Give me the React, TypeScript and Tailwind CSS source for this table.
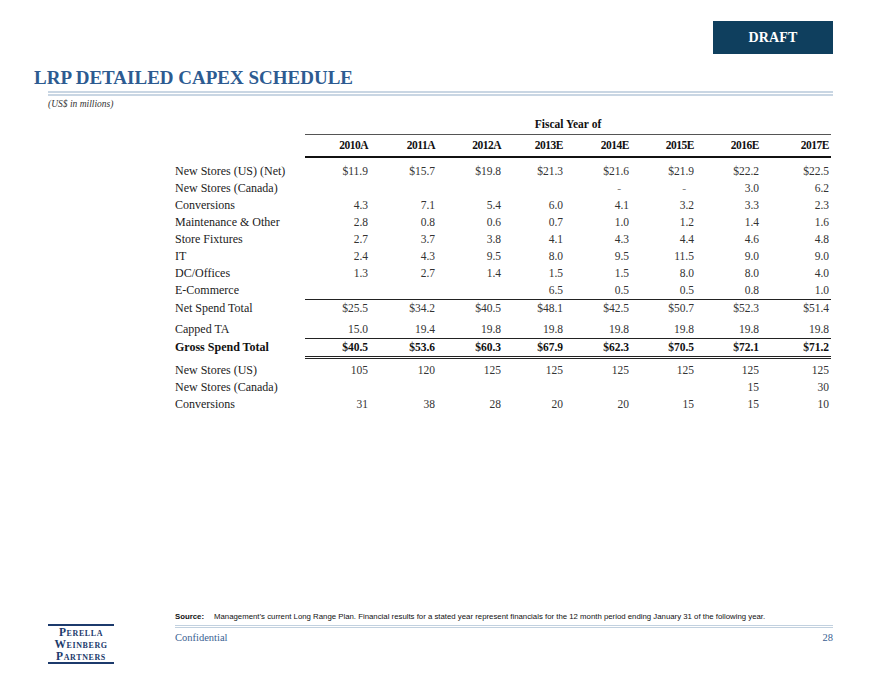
import React from "react";

const cols = ["2010A", "2011A", "2012A", "2013E", "2014E", "2015E", "2016E", "2017E"];
const colW = ["w-[65px]", "w-[67px]", "w-[66px]", "w-[62px]", "w-[66px]", "w-[65px]", "w-[65px]", "w-[70px]"];

type Row = { label: string; vals: string[] };

const rows: Row[] = [
  { label: "New Stores (US) (Net)", vals: ["$11.9", "$15.7", "$19.8", "$21.3", "$21.6", "$21.9", "$22.2", "$22.5"] },
  { label: "New Stores (Canada)", vals: ["", "", "", "", "-", "-", "3.0", "6.2"] },
  { label: "Conversions", vals: ["4.3", "7.1", "5.4", "6.0", "4.1", "3.2", "3.3", "2.3"] },
  { label: "Maintenance & Other", vals: ["2.8", "0.8", "0.6", "0.7", "1.0", "1.2", "1.4", "1.6"] },
  { label: "Store Fixtures", vals: ["2.7", "3.7", "3.8", "4.1", "4.3", "4.4", "4.6", "4.8"] },
  { label: "IT", vals: ["2.4", "4.3", "9.5", "8.0", "9.5", "11.5", "9.0", "9.0"] },
  { label: "DC/Offices", vals: ["1.3", "2.7", "1.4", "1.5", "1.5", "8.0", "8.0", "4.0"] },
  { label: "E-Commerce", vals: ["", "", "", "6.5", "0.5", "0.5", "0.8", "1.0"] },
];

function Vals({ vals, bold }: { vals: string[]; bold?: boolean }) {
  return (
    <>
      {vals.map((v, i) => (
        <div
          key={i}
          className={`${colW[i]} shrink-0 text-right ${bold ? "font-bold text-[#111]" : "text-[#333]"} ${
            v === "-" ? "pr-[10px] text-[#888]" : "pr-[2px]"
          }`}
        >
          {v}
        </div>
      ))}
    </>
  );
}

export default function App() {
  return (
    <div
      className="w-[880px] h-[680px] bg-white flex flex-col overflow-hidden"
      style={{ fontFamily: '"Liberation Serif", "Times New Roman", serif' }}
    >
      {/* Draft badge */}
      <div className="flex justify-end pr-[47px] pt-[21px]">
        <div className="w-[120px] h-[33px] bg-[#0f3f5e] flex items-center justify-center text-white font-bold text-[14px] tracking-[0.2px]">
          DRAFT
        </div>
      </div>

      {/* Title */}
      <div className="pl-[34px] mt-[13px] text-[19px] leading-[22px] font-bold text-[#2d5b91]">
        LRP DETAILED CAPEX SCHEDULE
      </div>
      <div className="ml-[48px] mr-[47px] mt-[2px] h-[5px] border-t-[2px] border-b-[2px] border-[#c9d6e3]" />
      <div className="pl-[48px] mt-[2px] text-[9.5px] leading-[12px] italic text-[#333]">(US$ in millions)</div>

      {/* Table */}
      <div className="pl-[175px] mt-[7px] text-[11.5px]">
        {/* Fiscal Year of */}
        <div className="flex">
          <div className="w-[130px] shrink-0" />
          <div className="w-[526px] border-b border-[#555] text-center font-bold text-[#111] leading-[14px] pb-[3px]">
            Fiscal Year of
          </div>
        </div>
        {/* Column headers */}
        <div className="flex">
          <div className="w-[130px] shrink-0" />
          <div className="flex w-[526px] border-b-2 border-[#111] h-[23px] items-center text-[11.5px] font-bold text-[#111]">
            {cols.map((c, i) => (
              <div key={c} className={`${colW[i]} shrink-0 text-right pr-[2px] tracking-[-0.5px]`}>
                {c}
              </div>
            ))}
          </div>
        </div>

        <div className="pt-[5px]">
          {rows.map((r) => (
            <div key={r.label} className="flex h-[17px] leading-[17px]">
              <div className="w-[130px] shrink-0 text-[#222] text-[12px]">{r.label}</div>
              <div className="flex w-[526px]">
                <Vals vals={r.vals} />
              </div>
            </div>
          ))}
          {/* Net Spend Total */}
          <div className="flex leading-[17px]">
            <div className="w-[130px] shrink-0 text-[#222] text-[12px] pt-px">Net Spend Total</div>
            <div className="flex w-[526px] border-t border-[#222] h-[18px]">
              <Vals vals={["$25.5", "$34.2", "$40.5", "$48.1", "$42.5", "$50.7", "$52.3", "$51.4"]} />
            </div>
          </div>
          {/* Capped TA */}
          <div className="flex h-[17px] leading-[17px] mt-[4px]">
            <div className="w-[130px] shrink-0 text-[#222] text-[12px]">Capped TA</div>
            <div className="flex w-[526px]">
              <Vals vals={["15.0", "19.4", "19.8", "19.8", "19.8", "19.8", "19.8", "19.8"]} />
            </div>
          </div>
          {/* Gross Spend Total */}
          <div className="flex leading-[17px]">
            <div className="w-[130px] shrink-0 text-[#111] text-[12px] font-bold pt-px">Gross Spend Total</div>
            <div className="flex w-[526px] border-t border-b-[3px] border-double border-t-solid border-[#222] h-[21px]">
              <Vals bold vals={["$40.5", "$53.6", "$60.3", "$67.9", "$62.3", "$70.5", "$72.1", "$71.2"]} />
            </div>
          </div>
          <div className="pt-[3px]">
            {[
              { label: "New Stores (US)", vals: ["105", "120", "125", "125", "125", "125", "125", "125"] },
              { label: "New Stores (Canada)", vals: ["", "", "", "", "", "", "15", "30"] },
              { label: "Conversions", vals: ["31", "38", "28", "20", "20", "15", "15", "10"] },
            ].map((r) => (
              <div key={r.label} className="flex h-[17px] leading-[17px]">
                <div className="w-[130px] shrink-0 text-[#222] text-[12px]">{r.label}</div>
                <div className="flex w-[526px]">
                  <Vals vals={r.vals} />
                </div>
              </div>
            ))}
          </div>
        </div>
      </div>

      <div className="flex-1" />

      {/* Footer */}
      <div className="flex pl-[48px] pr-[47px] pb-[16px] items-start">
        <div className="w-[66px] shrink-0 mt-[13px] border-t-2 border-b-2 border-[#1c3a6c] text-[#1c3a6c] text-[11.5px] leading-[12px] font-bold [font-variant:small-caps] tracking-[0.6px] text-center">
          <div>Perella</div>
          <div>Weinberg</div>
          <div>Partners</div>
        </div>
        <div className="flex-1 ml-[61px]">
          <div
            className="flex text-[7.8px] leading-[12px] text-[#111]"
            style={{ fontFamily: '"Liberation Sans", Arial, sans-serif' }}
          >
            <span className="font-bold w-[39px] shrink-0">Source:</span>
            <span>
              Management’s current Long Range Plan. Financial results for a stated year represent financials for the 12 month
              period ending January 31 of the following year.
            </span>
          </div>
          <div className="mt-[2px] h-[3px] border-t border-b border-[#c2d1df]" />
          <div className="flex justify-between mt-[3px] text-[10.5px] leading-[14px] text-[#3a5f92]">
            <span>Confidential</span>
            <span>28</span>
          </div>
        </div>
      </div>
    </div>
  );
}
